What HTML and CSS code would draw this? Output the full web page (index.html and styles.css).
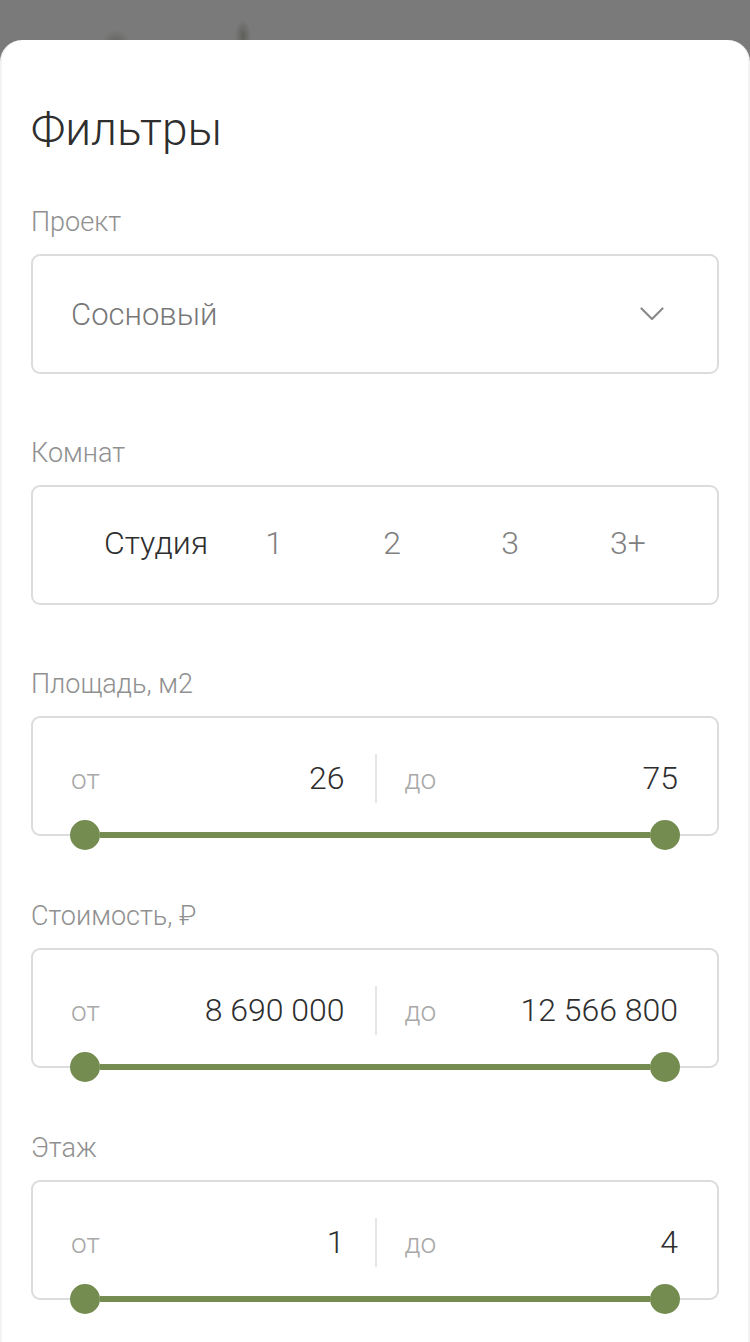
FILE: index.html
```html
<!DOCTYPE html>
<html lang="ru">
<head>
<meta charset="utf-8">
<title>Фильтры</title>
<link rel="stylesheet" href="styles.css">
</head>
<body>
<div class="sheet">
  <h1 class="title">Фильтры</h1>

  <section class="field">
    <div class="label">Проект</div>
    <div class="box select">
      <span class="select-value">Сосновый</span>
      <svg class="chevron" width="24" height="14" viewBox="0 0 24 14" aria-hidden="true">
        <polyline points="1.5,1.5 12,12 22.5,1.5" fill="none" stroke="#8a8a8a" stroke-width="2.2" stroke-linecap="round" stroke-linejoin="round"/>
      </svg>
    </div>
  </section>

  <section class="field">
    <div class="label">Комнат</div>
    <div class="box rooms">
      <span class="room active">Студия</span>
      <span class="room">1</span>
      <span class="room">2</span>
      <span class="room">3</span>
      <span class="room">3+</span>
    </div>
  </section>

  <section class="field range">
    <div class="label">Площадь, м2</div>
    <div class="box range-box">
      <div class="range-field from"><span class="pre">от</span><span class="val">26</span></div>
      <div class="range-sep"></div>
      <div class="range-field to"><span class="pre">до</span><span class="val">75</span></div>
    </div>
    <div class="slider"><span class="thumb"></span><span class="track"></span><span class="thumb"></span></div>
  </section>

  <section class="field range">
    <div class="label">Стоимость, ₽</div>
    <div class="box range-box">
      <div class="range-field from"><span class="pre">от</span><span class="val">8 690 000</span></div>
      <div class="range-sep"></div>
      <div class="range-field to"><span class="pre">до</span><span class="val">12 566 800</span></div>
    </div>
    <div class="slider"><span class="thumb"></span><span class="track"></span><span class="thumb"></span></div>
  </section>

  <section class="field range">
    <div class="label">Этаж</div>
    <div class="box range-box">
      <div class="range-field from"><span class="pre">от</span><span class="val">1</span></div>
      <div class="range-sep"></div>
      <div class="range-field to"><span class="pre">до</span><span class="val">4</span></div>
    </div>
    <div class="slider"><span class="thumb"></span><span class="track"></span><span class="thumb"></span></div>
  </section>
</div>
</body>
</html>
```

FILE: styles.css
```css
* {
  box-sizing: border-box;
}

html, body {
  margin: 0;
  padding: 0;
}

body {
  width: 750px;
  height: 1342px;
  overflow: hidden;
  background-color: #7a7a7a;
  background-image:
    radial-gradient(ellipse 14px 10px at 116px 40px, rgba(70, 72, 62, 0.35), rgba(70, 72, 62, 0) 100%),
    radial-gradient(ellipse 8px 16px at 243px 36px, rgba(60, 62, 52, 0.45), rgba(60, 62, 52, 0) 100%);
  background-repeat: no-repeat;
  font-family: Roboto, "Noto Sans", "Liberation Sans", sans-serif;
  font-weight: 300;
}

.sheet {
  margin-top: 40px;
  min-height: 1302px;
  background: #ffffff;
  border-radius: 22px 22px 0 0;
  border-left: 2px solid #f3f3f3;
  border-right: 2px solid #f3f3f3;
  padding: 62px 29px 0 29px;
}

.title {
  margin: 0 0 50px 0;
  font-size: 46px;
  line-height: 54px;
  font-weight: 300;
  color: #2e2e2e;
}

.field {
  margin-bottom: 63px;
}

.field.range {
  margin-bottom: 50px;
}

.label {
  font-size: 27px;
  line-height: 32px;
  color: #909090;
  margin-bottom: 16px;
}

.box {
  height: 120px;
  border: 2px solid #dcdcdc;
  border-radius: 9px;
  background: #fff;
}

.select {
  display: flex;
  align-items: center;
  justify-content: space-between;
  padding: 0 53px 0 38px;
}

.select-value {
  font-size: 31px;
  color: #777777;
}

.chevron {
  display: block;
}

.rooms {
  display: grid;
  grid-template-columns: repeat(5, 118px);
  align-items: center;
  padding-left: 64px;
  padding-bottom: 4px;
}

.room {
  text-align: center;
  font-size: 32px;
  color: #808080;
}

.room.active {
  color: #2e2e2e;
}

.range-box {
  display: flex;
  align-items: center;
  padding-top: 4px;
}

.range-field {
  flex: 1;
  display: flex;
  align-items: baseline;
  justify-content: space-between;
}

.range-field.from {
  padding: 0 30px 0 38px;
}

.range-field.to {
  padding: 0 39px 0 28px;
}

.pre {
  font-size: 28px;
  color: #a8a8a8;
}

.val {
  font-size: 32px;
  color: #2e2e2e;
}

.range-sep {
  width: 2px;
  height: 49px;
  background: #e6e6e6;
}

.slider {
  display: flex;
  align-items: center;
  height: 30px;
  margin: -16px 39px 0 39px;
}

.thumb {
  width: 30px;
  height: 30px;
  border-radius: 50%;
  background: #758c51;
  flex: none;
}

.track {
  flex: 1;
  height: 6px;
  background: #758c51;
}
```
